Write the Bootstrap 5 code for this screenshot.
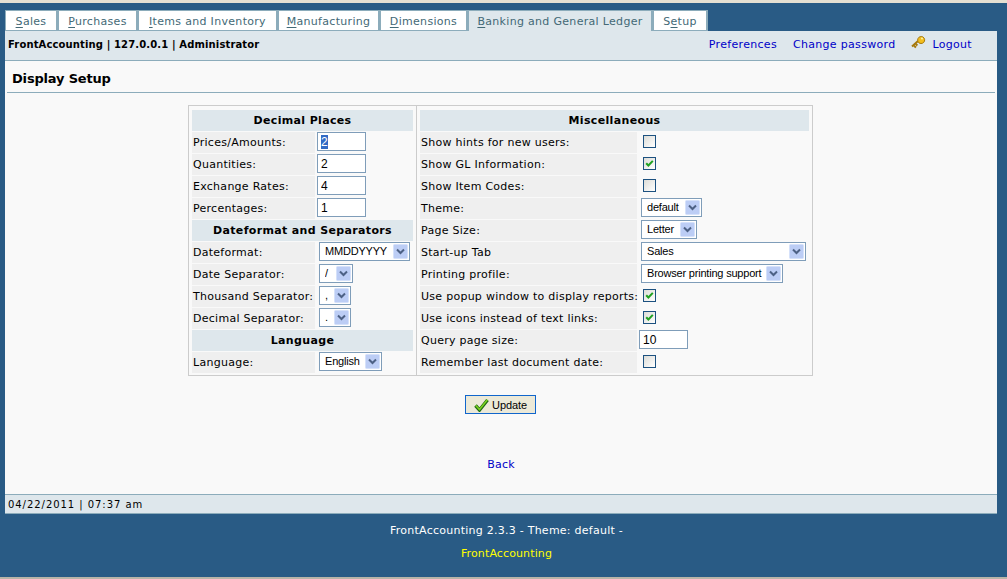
<!DOCTYPE html>
<html lang="en">
<head>
<meta charset="utf-8">
<title>Display Setup</title>
<link rel="stylesheet" href="https://cdn.jsdelivr.net/npm/bootstrap@5.3.0/dist/css/bootstrap.min.css">
<style>
html,body{height:100%;overflow:hidden}
body{background:#295b85;border-top:3px solid #e5e0d2;border-bottom:2px solid #b9b5a8;font:11px/14px "DejaVu Sans",Verdana,sans-serif;color:#000;box-sizing:border-box}
a{text-decoration:none;color:#0000c8}
.shell{padding:7px 10px 0 5px}
.tabstrip{height:21px;margin:0}
.tabstrip a{display:block;height:21px;background:#fff;border:1px solid #8cacbb;border-right-width:2px;color:#436976;line-height:21px;text-align:center;letter-spacing:.31px}
.tabstrip a:nth-child(1){width:53px}
.tabstrip a:nth-child(2){width:80px}
.tabstrip a:nth-child(3){width:140px}
.tabstrip a:nth-child(4){width:102px}
.tabstrip a:nth-child(5){width:88px}
.tabstrip a:nth-child(6){width:185px}
.tabstrip a:nth-child(7){width:55px}
.tabstrip a.on{background:#dee7ec;border-bottom:0}
.tabstrip a u{text-underline-offset:2px}
.topbar{height:30px;background:#dee7ec;border-bottom:1px solid #8cacbb;padding:0 25px 2px 3px;font-size:11px}
.topbar b{font-weight:700;font-size:10px;letter-spacing:.13px}
.topbar a{letter-spacing:.31px}
.keyicon{margin:-6px 6px 0 0}
.sheet{background:#f9f9f9;height:433px;padding:0 2px}
.heading{height:32px;line-height:35px;padding-left:5px;border-bottom:1px solid #8cacbb;font-size:13px;font-weight:700;letter-spacing:-.18px}
.panel{width:625px;height:271px;margin:12px auto 0;margin-left:181px;border:1px solid #ccc}
.side{padding:4px 3px 0}
.side-l{width:228px;border-right:1px solid #ccc}
.side-r{width:395px}
.rowline{height:21px;margin-bottom:1px}
.cap{background:#dee7ec;height:21px;margin-bottom:1px;text-align:center;font-weight:700;line-height:21px;letter-spacing:.35px}
.lab{background:#efefef;height:21px;line-height:21px;padding-left:1px;letter-spacing:.27px;white-space:nowrap;margin-right:2px}
.side-l .lab{width:123px}
.side-r .lab{width:217px}
.txt{width:49px;height:19px;margin-bottom:2px;border:1px solid #7f9db9;border-radius:0;padding:0 3px;font:12px "Liberation Sans",sans-serif;background:#fff;color:#000;outline:0;box-shadow:none}
.txt::selection{background:#316ac5;color:#fff}
.pick{height:19px;margin:0 0 2px 2px;border:1px solid #7f9db9;border-radius:0;padding:0 16px 0 5px;font:11px/17px "Liberation Sans",sans-serif;letter-spacing:-.2px;color:#000;appearance:none;-webkit-appearance:none;background:#fff url("data:image/svg+xml,%3Csvg xmlns='http://www.w3.org/2000/svg' width='15' height='15'%3E%3Crect x='.5' y='.5' width='14' height='14' rx='1' fill='%23bccdf5' stroke='%23d5e1fa'/%3E%3Cpath d='M4 5.500l3.500 3.500L11 5.500' fill='none' stroke='%234d6185' stroke-width='2'/%3E%3C/svg%3E") no-repeat right 1px center;outline:0}
.sz32{width:32px}.sz34{width:34px}.sz56{width:56px}.sz61{width:61px}.sz63{width:63px}.sz91{width:91px}.sz142{width:142px}.sz165{width:165px}
.tick{appearance:none;-webkit-appearance:none;width:13px;height:13px;margin:0 0 3px 4px;border:1px solid #1c5180;border-radius:0;background:linear-gradient(135deg,#dcdcd7,#fff);display:block}
.tick:checked{background:linear-gradient(135deg,#dcdcd7,#fff) center/11px 11px no-repeat;background-image:url("data:image/svg+xml,%3Csvg xmlns='http://www.w3.org/2000/svg' viewBox='0 0 11 11'%3E%3Cpath d='M2.200 5.200l2.200 2.300 4.400-4.600' fill='none' stroke='%2321a121' stroke-width='2'/%3E%3C/svg%3E"),linear-gradient(135deg,#dcdcd7,#fff)}
.go{width:71px;height:19px;margin:19px 0 0 458px;padding:1px 0 0;border:1px solid #1166cc;border-radius:0;background:#ece9d8;color:#000;font:11px/16px "Liberation Sans",sans-serif;letter-spacing:-.1px;gap:3px}
.backlink{margin:44px 0 0 0;text-align:center;letter-spacing:.2px}
.stamp{height:20px;background:#dee7ec;border-top:1px solid #8cacbb;border-bottom:1px solid #8cacbb;padding-left:3px;line-height:19px;font-size:10px;letter-spacing:.95px}
.credits{text-align:center;color:#fff;padding-left:11px;line-height:14px;letter-spacing:.25px}
.credits a{color:#ff0;display:block;margin-top:9px;letter-spacing:.12px}
.credits div{margin-top:10px}
</style>
</head>
<body>
<div class="shell">
  <nav class="tabstrip d-flex">
    <a href="#"><u>S</u>ales</a>
    <a href="#"><u>P</u>urchases</a>
    <a href="#"><u>I</u>tems and Inventory</a>
    <a href="#"><u>M</u>anufacturing</a>
    <a href="#"><u>D</u>imensions</a>
    <a class="on" href="#"><u>B</u>anking and General Ledger</a>
    <a href="#">S<u>e</u>tup</a>
  </nav>
  <header class="topbar d-flex align-items-center justify-content-between">
    <b>FrontAccounting | 127.0.0.1 | Administrator</b>
    <div class="d-flex align-items-center">
      <a href="#" class="me-3">Preferences</a>
      <a href="#" class="me-3">Change password</a>
      <svg class="keyicon" width="15" height="15" viewBox="0 0 15 15"><path d="M1 12.500l6-5.500M3.200 12l1.800 1.600M5 10.200l1.400 1.300" fill="none" stroke="#a5790e" stroke-width="2"/><path d="M7 7.500a3.500 3.500 0 1 1 3 2 3 3 0 0 1-3-2z" fill="#f3be1d" stroke="#a5790e"/><circle cx="11" cy="4.500" r="1" fill="#fff3a8"/></svg>
      <a href="#">Logout</a>
    </div>
  </header>
  <main class="sheet">
    <div class="heading">Display Setup</div>
    <form class="panel d-flex">
      <section class="side side-l">
        <div class="cap">Decimal Places</div>
        <div class="rowline d-flex align-items-center"><span class="lab">Prices/Amounts:</span><input id="firstbox" class="txt" value="2"></div>
        <div class="rowline d-flex align-items-center"><span class="lab">Quantities:</span><input class="txt" value="2"></div>
        <div class="rowline d-flex align-items-center"><span class="lab">Exchange Rates:</span><input class="txt" value="4"></div>
        <div class="rowline d-flex align-items-center"><span class="lab">Percentages:</span><input class="txt" value="1"></div>
        <div class="cap">Dateformat and Separators</div>
        <div class="rowline d-flex align-items-center"><span class="lab">Dateformat:</span><select class="pick sz91"><option>MMDDYYYY</option></select></div>
        <div class="rowline d-flex align-items-center"><span class="lab">Date Separator:</span><select class="pick sz34"><option>/</option></select></div>
        <div class="rowline d-flex align-items-center"><span class="lab">Thousand Separator:</span><select class="pick sz32"><option>,</option></select></div>
        <div class="rowline d-flex align-items-center"><span class="lab">Decimal Separator:</span><select class="pick sz32"><option>.</option></select></div>
        <div class="cap">Language</div>
        <div class="rowline d-flex align-items-center"><span class="lab">Language:</span><select class="pick sz63"><option>English</option></select></div>
      </section>
      <section class="side side-r">
        <div class="cap">Miscellaneous</div>
        <div class="rowline d-flex align-items-center"><span class="lab">Show hints for new users:</span><input type="checkbox" class="tick"></div>
        <div class="rowline d-flex align-items-center"><span class="lab">Show GL Information:</span><input type="checkbox" class="tick" checked></div>
        <div class="rowline d-flex align-items-center"><span class="lab">Show Item Codes:</span><input type="checkbox" class="tick"></div>
        <div class="rowline d-flex align-items-center"><span class="lab">Theme:</span><select class="pick sz61"><option>default</option></select></div>
        <div class="rowline d-flex align-items-center"><span class="lab">Page Size:</span><select class="pick sz56"><option>Letter</option></select></div>
        <div class="rowline d-flex align-items-center"><span class="lab">Start-up Tab</span><select class="pick sz165"><option>Sales</option></select></div>
        <div class="rowline d-flex align-items-center"><span class="lab">Printing profile:</span><select class="pick sz142"><option>Browser printing support</option></select></div>
        <div class="rowline d-flex align-items-center"><span class="lab">Use popup window to display reports:</span><input type="checkbox" class="tick" checked></div>
        <div class="rowline d-flex align-items-center"><span class="lab">Use icons instead of text links:</span><input type="checkbox" class="tick" checked></div>
        <div class="rowline d-flex align-items-center"><span class="lab">Query page size:</span><input class="txt" value="10"></div>
        <div class="rowline d-flex align-items-center"><span class="lab">Remember last document date:</span><input type="checkbox" class="tick"></div>
      </section>
    </form>
    <button type="button" class="go d-flex align-items-center justify-content-center">
      <svg width="15" height="14" viewBox="0 0 15 14"><path d="M1.500 7.500l4 4.500 8-10" fill="none" stroke="#1e6b12" stroke-width="3.400"/><path d="M1.800 7.500l3.700 4 7.800-9.800" fill="none" stroke="#7ed321" stroke-width="1.500"/></svg>Update</button>
    <div class="backlink"><a href="#">Back</a></div>
  </main>
  <div class="stamp">04/22/2011 | 07:37 am</div>
  <footer class="credits">
    <div>FrontAccounting 2.3.3 - Theme: default -</div>
    <a href="#">FrontAccounting</a>
  </footer>
</div>
<script src="https://cdn.jsdelivr.net/npm/bootstrap@5.3.0/dist/js/bootstrap.bundle.min.js"></script>
<script>var box=document.getElementById('firstbox');box.focus();box.select();</script>
</body>
</html>
